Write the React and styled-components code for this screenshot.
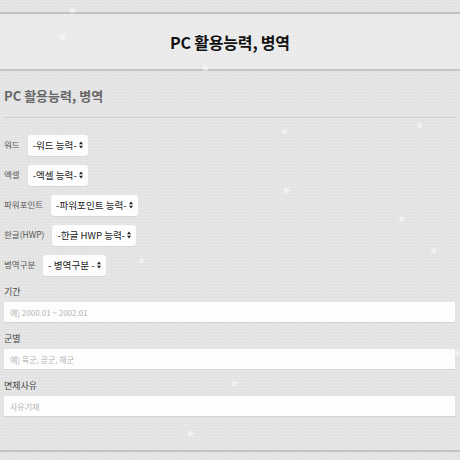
import React from 'react';
import styled, { createGlobalStyle } from 'styled-components';

const GlobalStyle = createGlobalStyle`
    body {
        margin: 0;
        background: #e3e3e3;
        font-family: "Noto Sans CJK KR", "Noto Sans", sans-serif;
    }
`;

const Page = styled.div`
    position: relative;
    width: 460px;
    height: 460px;
    overflow: hidden;
    background-color: #e3e3e3;
    background-image: radial-gradient(rgba(255, 255, 255, 0.35) 0.6px, transparent 0.8px);
    background-size: 3px 3px;
`;

const TopStrip = styled.div`
    height: 12px;
`;

const Header = styled.header`
    height: 55px;
    border-top: 2px solid #c2c2c2;
    border-bottom: 2px solid #c6c6c6;
    background: rgba(255, 255, 255, 0.25);
    display: flex;
    align-items: center;
    justify-content: center;
    h1 {
        margin: 0;
        font-size: 16px;
        font-weight: 700;
        color: #111;
        letter-spacing: -0.2px;
    }
`;

const Content = styled.main`
    padding: 0 4px;
    height: 379px;
    border-bottom: 2px solid #c4c4c4;
`;

const SectionTitle = styled.h2`
    margin: 0;
    padding: 15px 0 12px;
    font-size: 13px;
    font-weight: 700;
    color: #676767;
    border-bottom: 1px solid #d2d2d2;
`;

const SelectList = styled.div`
    display: flex;
    flex-direction: column;
    gap: 10px;
    padding: 17px 0 0 0;
`;

const Row = styled.div`
    display: flex;
    align-items: center;
    gap: 8px;
    height: 20px;
`;

const Label = styled.label`
    font-size: 8.5px;
    color: #555;
    margin-top: -3px;
`;

const SelectBox = styled.div`
    display: flex;
    align-items: center;
    gap: 2px;
    height: 21px;
    padding: 0 5px 0 5px;
    background: #fdfdfd;
    border-radius: 3px;
    box-shadow: 0 1px 1px rgba(0, 0, 0, 0.06);
    font-size: 9.6px;
    color: #222;
    white-space: nowrap;
`;

const Arrows = styled.svg`
    width: 4px;
    height: 8px;
    flex: none;
`;

const FieldList = styled.div`
    display: flex;
    flex-direction: column;
    padding-top: 10px;
`;

const FieldLabel = styled.label`
    font-size: 9px;
    color: #444;
    line-height: 14px;
    padding: 0 0 3px 0;
`;

const TextInput = styled.div`
    height: 21px;
    width: 451px;
    display: flex;
    align-items: center;
    padding-left: 6px;
    box-sizing: border-box;
    background: #fcfdfc;
    border-bottom: 1px solid #d4d4d4;
    font-size: 8px;
    color: #b4b4b4;
    margin-bottom: ${(p) => p.$gap || 10}px;
`;

const Flake = styled.span`
    position: absolute;
    width: 5px;
    height: 5px;
    border-radius: 50%;
    background: rgba(255, 255, 255, 0.45);
    box-shadow: 0 0 2px rgba(255, 255, 255, 0.5);
`;

const selects = [
    { label: '워드', value: '-워드 능력-' },
    { label: '엑셀', value: '-엑셀 능력-' },
    { label: '파워포인트', value: '-파워포인트 능력-' },
    { label: '한글(HWP)', value: '-한글 HWP 능력-' },
    { label: '병역구분', value: '- 병역구분 -' }
];

const fields = [
    { label: '기간', placeholder: '예) 2000.01 ~ 2002.01' },
    { label: '군별', placeholder: '예) 육군, 공군, 해군' },
    { label: '면제사유', placeholder: '사유기재' }
];

const flakes = [
    [72, 10],
    [62, 37],
    [205, 68],
    [419, 125],
    [284, 131],
    [433, 250],
    [141, 260],
    [286, 190],
    [401, 218],
    [457, 353],
    [234, 383],
    [190, 433]
];

function App() {
    return (
        <Page>
            <GlobalStyle />
            <TopStrip />
            <Header>
                <h1>PC 활용능력, 병역</h1>
            </Header>
            <Content>
                <SectionTitle>PC 활용능력, 병역</SectionTitle>
                <SelectList>
                    {selects.map((s) => (
                        <Row key={s.label}>
                            <Label>{s.label}</Label>
                            <SelectBox>
                                {s.value}
                                <Arrows viewBox="0 0 4 8">
                                    <path d="M2 0.5 L4 3.3 L0 3.3 Z M0 4.7 L4 4.7 L2 7.5 Z" fill="#222" />
                                </Arrows>
                            </SelectBox>
                        </Row>
                    ))}
                </SelectList>
                <FieldList>
                    {fields.map((f) => (
                        <React.Fragment key={f.label}>
                            <FieldLabel>{f.label}</FieldLabel>
                            <TextInput $gap={9}>{f.placeholder}</TextInput>
                        </React.Fragment>
                    ))}
                </FieldList>
            </Content>
            {flakes.map(([x, y], i) => (
                <Flake key={i} style={{ left: x - 2, top: y - 2 }} />
            ))}
        </Page>
    );
}

export default App;
